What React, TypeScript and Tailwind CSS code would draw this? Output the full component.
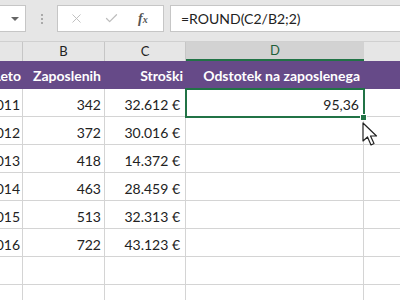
import { X, Check } from 'lucide-react';

const cols = ['w-[23px]', 'w-[82px]', 'w-[81px]', 'w-[178px]', 'flex-1'];

const rows = [
  ['2011', '342', '32.612 €', '95,36'],
  ['2012', '372', '30.016 €', ''],
  ['2013', '418', '14.372 €', ''],
  ['2014', '463', '28.459 €', ''],
  ['2015', '513', '32.313 €', ''],
  ['2016', '722', '43.123 €', ''],
  ['', '', '', ''],
  ['', '', '', ''],
];

const cell = 'flex items-center justify-end overflow-hidden whitespace-nowrap';

export default function App() {
  return (
    <div
      className="w-[400px] h-[300px] overflow-hidden bg-white relative text-[#222]"
      style={{ fontFamily: 'Lato, "Liberation Sans", sans-serif' }}
    >
      {/* Formula bar */}
      <div className="h-[42px] bg-[#e6e6e6] flex items-start pt-[5px] border-b border-[#d0d0d0]">
        <div className="w-[26px] h-[27px] bg-white border border-l-0 border-[#c6c6c6] flex items-center justify-end pr-[6px]">
          <div className="w-0 h-0 border-l-[4px] border-r-[4px] border-t-[4px] border-l-transparent border-r-transparent border-t-[#666]" />
        </div>
        <div className="w-[31px] h-[27px] flex flex-col items-center justify-center gap-[2px]">
          <div className="w-[2px] h-[2px] bg-[#aaa]" />
          <div className="w-[2px] h-[2px] bg-[#aaa]" />
          <div className="w-[2px] h-[2px] bg-[#aaa]" />
        </div>
        <div className="w-[107px] h-[27px] bg-white border border-[#c6c6c6] flex items-center">
          <X className="ml-[11px] w-[15px] h-[15px] text-[#bdbdbd]" strokeWidth={1.5} />
          <Check className="ml-[20px] w-[15px] h-[15px] text-[#bdbdbd]" strokeWidth={2} />
          <span
            className="ml-[19px] text-[14px] italic font-bold text-[#555]"
            style={{ fontFamily: '"Liberation Serif", serif' }}
          >
            f<span className="text-[10px]">x</span>
          </span>
        </div>
        <div className="ml-[6px] flex-1 h-[27px] bg-white border border-r-0 border-[#c6c6c6] flex items-center pl-[10px] text-[14px] text-[#222]">
          =ROUND(C2/B2;2)
        </div>
      </div>

      {/* Column headers */}
      <div className="h-[19px] flex bg-[#e6e6e6] text-[13px]">
        <div className={`${cols[0]} border-r border-[#c6c6c6]`} />
        <div className={`${cols[1]} border-r border-[#c6c6c6] flex items-center justify-center`}>B</div>
        <div className={`${cols[2]} border-r border-[#c6c6c6] flex items-center justify-center`}>C</div>
        <div className={`${cols[3]} bg-[#d2d2d2] border-b-2 border-[#217346] flex items-center justify-center text-[#1e5f3a]`}>D</div>
        <div className={`${cols[4]}`} />
      </div>

      {/* Header row */}
      <div className="h-[28px] flex bg-[#664a88] text-white font-bold text-[14px]">
        <div className={`${cols[0]} ${cell} pr-[2px]`}>Leto</div>
        <div className={`${cols[1]} ${cell} pr-[4px]`}>Zaposlenih</div>
        <div className={`${cols[2]} ${cell} pr-[3px]`}>Stroški</div>
        <div className={`${cols[3]} ${cell} pr-[4px]`}>Odstotek na zaposlenega</div>
        <div className={`${cols[4]}`} />
      </div>

      {/* Data rows */}
      {rows.map((r, i) => (
        <div key={i} className="h-[28px] flex text-[14px]">
          <div className={`${cols[0]} ${cell} pt-[3px] border-r border-b border-[#d4d4d4] pr-[2px]`}>{r[0]}</div>
          <div className={`${cols[1]} ${cell} pt-[3px] border-r border-b border-[#d4d4d4] pr-[3px]`}>{r[1]}</div>
          <div className={`${cols[2]} ${cell} pt-[3px] border-r border-b border-[#d4d4d4] pr-[5px]`}>{r[2]}</div>
          <div className={`${cols[3]} ${cell} pt-[3px] border-r border-b border-[#d4d4d4] pr-[4px]`}>{r[3]}</div>
          <div className={`${cols[4]} border-b border-[#d4d4d4]`} />
        </div>
      ))}

      {/* Selection */}
      <div className="absolute left-[185px] top-[88px] w-[180px] h-[30px] border-2 border-[#217346] pointer-events-none" />
      <div className="absolute left-[361px] top-[115px] w-[5px] h-[5px] bg-[#217346] outline outline-1 outline-white" />

      {/* Cursor */}
      <svg className="absolute left-[362px] top-[122px]" width="18" height="26" viewBox="0 0 18 26">
        <path d="M1 1 L1 19 L5.5 15 L9 23 L12 21.5 L8.5 14 L14.5 14 Z" fill="white" stroke="#222" strokeWidth="1.2" strokeLinejoin="round" />
      </svg>
    </div>
  );
}
